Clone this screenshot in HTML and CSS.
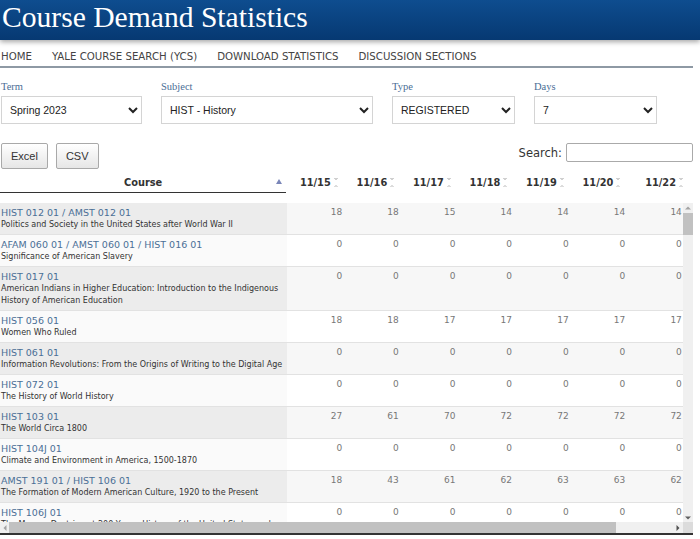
FILE: index.html
```html
<!DOCTYPE html>
<html lang="en">
<head>
<meta charset="utf-8">
<title>Course Demand Statistics</title>
<link rel="stylesheet" href="styles.css">
</head>
<body>
<header class="banner"><h1 class="site-title">Course Demand Statistics</h1></header>
<div class="page">
  <nav class="nav">
    <a href="#">HOME</a>
    <a href="#">YALE COURSE SEARCH (YCS)</a>
    <a href="#">DOWNLOAD STATISTICS</a>
    <a href="#">DISCUSSION SECTIONS</a>
  </nav>

  <form class="filters">
    <label class="field w-term"><span class="field-label">Term</span>
      <select><option>Spring 2023</option></select></label>
    <label class="field w-subject"><span class="field-label">Subject</span>
      <select><option>HIST - History</option></select></label>
    <label class="field w-type"><span class="field-label">Type</span>
      <select><option>REGISTERED</option></select></label>
    <label class="field w-days"><span class="field-label">Days</span>
      <select><option>7</option></select></label>
  </form>

  <div class="controls">
    <div class="buttons">
      <button class="btn" type="button">Excel</button>
      <button class="btn" type="button">CSV</button>
    </div>
    <label class="search">Search:<input type="search"></label>
  </div>

  <div class="grid">
    <table class="head">
      <colgroup><col class="c-course"><col class="c-num"><col class="c-num"><col class="c-num"><col class="c-num"><col class="c-num"><col class="c-num"><col class="c-last"></colgroup>
      <thead>
        <tr>
          <th class="th-course">Course<span class="asc"></span></th>
          <th>11/15<span class="sort"></span></th>
          <th>11/16<span class="sort"></span></th>
          <th>11/17<span class="sort"></span></th>
          <th>11/18<span class="sort"></span></th>
          <th>11/19<span class="sort"></span></th>
          <th>11/20<span class="sort"></span></th>
          <th class="th-last">11/22<span class="sort"></span></th>
        </tr>
      </thead>
    </table>
    <div class="viewport">
      <div class="clip">
        <table class="body">
          <colgroup><col class="c-course"><col class="c-num"><col class="c-num"><col class="c-num"><col class="c-num"><col class="c-num"><col class="c-num"><col class="c-num"><col class="c-pad"></colgroup>
          <tbody>
            <tr class="odd"><td class="course"><a href="#">HIST 012 01 / AMST 012 01</a><span class="desc">Politics and Society in the United States after World War II</span></td><td>18</td><td>18</td><td>15</td><td>14</td><td>14</td><td>14</td><td>14</td><td></td></tr>
            <tr class="even"><td class="course"><a href="#">AFAM 060 01 / AMST 060 01 / HIST 016 01</a><span class="desc">Significance of American Slavery</span></td><td>0</td><td>0</td><td>0</td><td>0</td><td>0</td><td>0</td><td>0</td><td></td></tr>
            <tr class="odd"><td class="course"><a href="#">HIST 017 01</a><span class="desc">American Indians in Higher Education: Introduction to the Indigenous History of American Education</span></td><td>0</td><td>0</td><td>0</td><td>0</td><td>0</td><td>0</td><td>0</td><td></td></tr>
            <tr class="even"><td class="course"><a href="#">HIST 056 01</a><span class="desc">Women Who Ruled</span></td><td>18</td><td>18</td><td>17</td><td>17</td><td>17</td><td>17</td><td>17</td><td></td></tr>
            <tr class="odd"><td class="course"><a href="#">HIST 061 01</a><span class="desc">Information Revolutions: From the Origins of Writing to the Digital Age</span></td><td>0</td><td>0</td><td>0</td><td>0</td><td>0</td><td>0</td><td>0</td><td></td></tr>
            <tr class="even"><td class="course"><a href="#">HIST 072 01</a><span class="desc">The History of World History</span></td><td>0</td><td>0</td><td>0</td><td>0</td><td>0</td><td>0</td><td>0</td><td></td></tr>
            <tr class="odd"><td class="course"><a href="#">HIST 103 01</a><span class="desc">The World Circa 1800</span></td><td>27</td><td>61</td><td>70</td><td>72</td><td>72</td><td>72</td><td>72</td><td></td></tr>
            <tr class="even"><td class="course"><a href="#">HIST 104J 01</a><span class="desc">Climate and Environment in America, 1500-1870</span></td><td>0</td><td>0</td><td>0</td><td>0</td><td>0</td><td>0</td><td>0</td><td></td></tr>
            <tr class="odd"><td class="course"><a href="#">AMST 191 01 / HIST 106 01</a><span class="desc">The Formation of Modern American Culture, 1920 to the Present</span></td><td>18</td><td>43</td><td>61</td><td>62</td><td>63</td><td>63</td><td>62</td><td></td></tr>
            <tr class="even"><td class="course"><a href="#">HIST 106J 01</a><span class="desc">The Monroe Doctrine at 200 Years: History of the United States and Latin America</span></td><td>0</td><td>0</td><td>0</td><td>0</td><td>0</td><td>0</td><td>0</td><td></td></tr>
          </tbody>
        </table>
      </div>
      <div class="vbar" aria-hidden="true"><span class="arr up"></span><span class="thumb"></span><span class="fill"></span><span class="arr down"></span></div>
      <div class="hbar" aria-hidden="true"><span class="arr left"></span><span class="thumb"></span><span class="fill"></span><span class="arr right"></span></div>
      <div class="corner"></div>
    </div>
  </div>
</div>
</body>
</html>
```

FILE: styles.css
```css
html, body { margin: 0; padding: 0; background: #fff; }
body { font-family: "DejaVu Sans", Verdana, sans-serif; color: #333; }

.banner {
  height: 40px;
  background: linear-gradient(#0e4d8f, #063972);
  box-shadow: 0 2px 5px rgba(0, 0, 0, 0.35);
  position: relative;
}
.site-title {
  margin: 0;
  padding: 0 0 0 2px;
  font: normal 29.6px/34px "Liberation Serif", "Times New Roman", serif;
  color: #fff;
}

.page { width: 693px; }

.nav {
  display: flex;
  gap: 20px;
  padding: 10px 0 3px 1px;
  border-bottom: 2px solid #8e99a4;
}
.nav a {
  font-size: 10.2px;
  line-height: 13px;
  color: #444;
  text-decoration: none;
}

.filters {
  display: flex;
  gap: 19px;
  margin: 13px 0 0 1px;
}
.field { display: flex; flex-direction: column; }
.field-label {
  font: 10.5px/12px "Liberation Serif", "Times New Roman", serif;
  color: #4a6e96;
  margin-bottom: 3px;
}
.field select {
  height: 28px;
  font: 10.5px "Liberation Sans", Arial, sans-serif;
  color: #222;
  background: #fff;
  border: 1px solid #d4d4d4;
  border-radius: 0;
  padding: 0 4px;
}
.w-term select { width: 141px; }
.w-subject select { width: 212px; }
.w-type select { width: 123px; }
.w-days select { width: 123px; }

.controls {
  display: flex;
  justify-content: space-between;
  align-items: flex-start;
  margin: 19px 0 0 1px;
}
.buttons { display: flex; gap: 8px; }
.btn {
  height: 26px;
  padding: 0 9px;
  font: 11px "Liberation Sans", Arial, sans-serif;
  color: #333;
  background: linear-gradient(#ffffff, #e6e6e6);
  border: 1px solid #a9a9a9;
  border-radius: 2px;
}
.search {
  display: flex;
  align-items: center;
  gap: 4px;
  font-size: 11.5px;
  color: #333;
}
.search input {
  width: 127px;
  height: 19px;
  box-sizing: border-box;
  border: 1px solid #aaa;
  border-radius: 2px;
  padding: 0 3px;
}

.grid { margin-top: 4px; }
table { border-collapse: collapse; table-layout: fixed; }
.head { width: 693px; }
.c-course { width: 286px; }
.c-num { width: 56.5px; }
.c-last { width: 67.5px; }
.c-pad { width: 58px; }

.head th {
  height: 19px;
  padding: 0 5px 0 0;
  font-size: 9.8px;
  font-weight: bold;
  color: #333;
  text-align: right;
  white-space: nowrap;
}
.head th.th-course {
  position: relative;
  text-align: center;
  padding: 0;
  border-bottom: 1px solid #333;
}
.head th.th-last { padding-right: 10px; }
.asc {
  position: absolute;
  right: 4px;
  top: 6px;
  width: 0; height: 0;
  border-left: 3px solid transparent;
  border-right: 3px solid transparent;
  border-bottom: 5px solid #7a86b8;
}
.sort {
  display: inline-block;
  width: 4px;
  height: 9px;
  margin-left: 3px;
  vertical-align: -1px;
  background:
    linear-gradient(to top right, transparent 50%, #d0d0d0 50%) left top / 2px 3px no-repeat,
    linear-gradient(to top left, transparent 50%, #d0d0d0 50%) right top / 2px 3px no-repeat,
    linear-gradient(to bottom right, transparent 50%, #dcdcdc 50%) left bottom / 2px 3px no-repeat,
    linear-gradient(to bottom left, transparent 50%, #dcdcdc 50%) right bottom / 2px 3px no-repeat;
}

.viewport {
  margin-top: 10px;
  display: grid;
  grid-template-columns: 683px 10px;
  grid-template-rows: 319px 11px;
  border-bottom: 2px solid #333;
}
.clip { overflow: hidden; }

.vbar, .hbar {
  display: flex;
  background: #f0f0f0;
}
.vbar { flex-direction: column; align-items: center; }
.hbar { flex-direction: row; align-items: center; }
.vbar .thumb { width: 10px; height: 22px; margin-top: 1px; background: #c1c1c1; }
.hbar .thumb { height: 11px; width: 607px; background: #c1c1c1; }
.fill { flex: 1; }
.arr { flex: none; width: 10px; height: 9px; position: relative; }
.arr::after {
  content: "";
  position: absolute;
  left: 50%; top: 50%;
  width: 0; height: 0;
  transform: translate(-50%, -50%);
}
.arr.up::after { border-left: 3px solid transparent; border-right: 3px solid transparent; border-bottom: 3px solid #a3a3a3; }
.arr.down::after { border-left: 3px solid transparent; border-right: 3px solid transparent; border-top: 3px solid #606060; }
.arr.left { width: 9px; height: 11px; }
.arr.right { width: 9px; height: 11px; margin-right: 1px; }
.arr.left::after { border-top: 3px solid transparent; border-bottom: 3px solid transparent; border-right: 3px solid #a3a3a3; }
.arr.right::after { border-top: 3px solid transparent; border-bottom: 3px solid transparent; border-left: 3px solid #505050; }
.corner { background: #dcdcdc; }

.body { width: 741px; }
.body td {
  vertical-align: top;
  padding: 3px 1px 3px 0;
  border-top: 1px solid #e2e2e2;
  font-size: 9px;
  line-height: 13px;
  color: #777;
  text-align: right;
}
.body tr:first-child td { border-top: 0; }
.body td.course {
  text-align: left;
  padding-left: 1px;
  padding-right: 4px;
}
.course a {
  display: block;
  font-size: 9.5px;
  line-height: 13px;
  color: #4a6f96;
  text-decoration: none;
}
.desc {
  display: block;
  font-size: 8px;
  line-height: 12px;
  color: #333;
}
tr.odd td { background: #f7f7f7; }
tr.odd td.course { background: #ececec; }
tr.even td { background: #fff; }
tr.even td.course { background: #fafafa; }
```
